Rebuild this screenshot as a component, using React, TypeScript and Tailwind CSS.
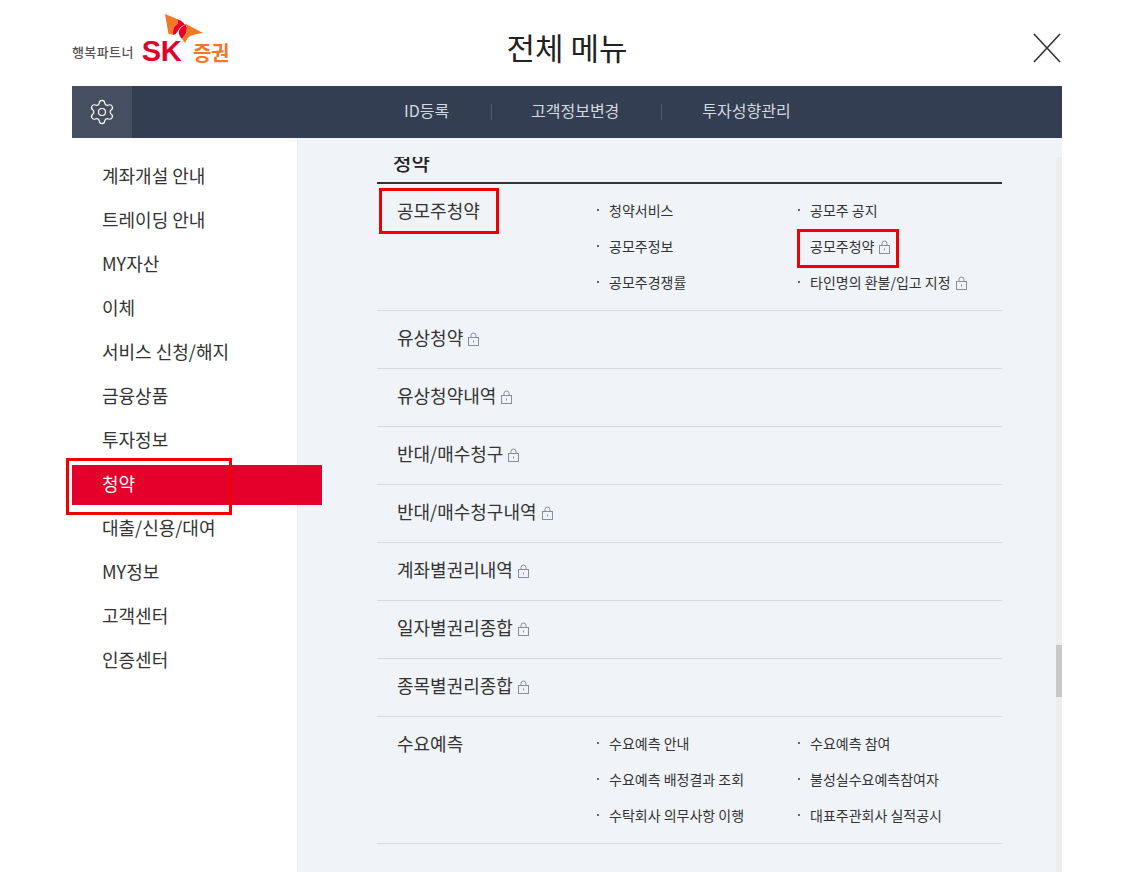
import { Settings } from "lucide-react";

const sideMenu = [
	"계좌개설 안내",
	"트레이딩 안내",
	"MY자산",
	"이체",
	"서비스 신청/해지",
	"금융상품",
	"투자정보",
	"청약",
	"대출/신용/대여",
	"MY정보",
	"고객센터",
	"인증센터",
];

const plainRows = [
	"유상청약",
	"유상청약내역",
	"반대/매수청구",
	"반대/매수청구내역",
	"계좌별권리내역",
	"일자별권리종합",
	"종목별권리종합",
];

type SubItem = { label: string; lock?: boolean; boxed?: boolean };

const offeringItems: SubItem[] = [
	{ label: "청약서비스" },
	{ label: "공모주 공지" },
	{ label: "공모주정보" },
	{ label: "공모주청약", lock: true, boxed: true },
	{ label: "공모주경쟁률" },
	{ label: "타인명의 환불/입고 지정", lock: true },
];

const forecastItems: SubItem[] = [
	{ label: "수요예측 안내" },
	{ label: "수요예측 참여" },
	{ label: "수요예측 배정결과 조회" },
	{ label: "불성실수요예측참여자" },
	{ label: "수탁회사 의무사항 이행" },
	{ label: "대표주관회사 실적공시" },
];

function LockIcon({ className }: { className: string }) {
	return (
		<svg viewBox="0 0 11 14" width="11" height="14" fill="none" className={className}>
			<path d="M3 6V3.5a2.5 2.5 0 0 1 5 0V6" stroke="#8a8f96" />
			<rect x="0.5" y="5.5" width="10" height="8" stroke="#8a8f96" />
			<rect x="5" y="8.5" width="1" height="2" fill="#8a8f96" />
		</svg>
	);
}

function SkLogo() {
	return (
		<div className="flex items-end w-[159px] h-[52px] relative">
			<span className="text-[13px] leading-[16px] font-medium text-[#555] mb-[6px] tracking-[0.4px] whitespace-nowrap">
				행복파트너
			</span>
			<span className="ml-[8px] text-[29px] leading-[30px] font-black text-[#e4002b] font-['Liberation_Sans',sans-serif] tracking-[-0.5px]">
				SK
			</span>
			<span className="ml-[12px] text-[20px] leading-[24px] font-bold text-[#f47725] mb-[1px] tracking-[-0.5px] whitespace-nowrap">
				증권
			</span>
			<svg viewBox="0 0 40 33" width="40" height="33" className="absolute left-[93px] top-0">
				<path d="M0 0 L12 5 Q15 9 10 12 Q7 16 8.5 21 L3.5 20 Z" fill="#f47725" />
				<path d="M12 5 Q18 7 20 11 Q15 12 13 17 Q11 20 8.5 21 Q7 16 10 12 Q15 9 12 5 Z" fill="#e4002b" />
				<path d="M20 11 L21 10 Q24 18 17 25 Q13 21 14 17 Q15 13 20 11 Z" fill="#e4002b" />
				<path d="M21 10 L38 19 Q30 20 25 22 Q22 24 20 29 L17 25 Q24 18 21 10 Z" fill="#f47725" />
			</svg>
		</div>
	);
}

function SubGrid({ items }: { items: SubItem[] }) {
	return (
		<div className="grid grid-cols-[201px_1fr] auto-rows-[36px] ml-[218px] pt-[8px]">
			{items.map((item) => (
				<div
					key={item.label}
					className="relative flex items-center pl-[14px] text-[14px] text-[#333] whitespace-nowrap"
				>
					{!item.boxed && (
						<span className="absolute left-[2px] top-[17px] w-[2px] h-[2px] bg-[#666]" />
					)}
					{item.label}
					{item.lock && <LockIcon className="ml-[5px] mt-[2px]" />}
					{item.boxed && (
						<span className="absolute left-[1px] top-[1px] w-[102px] h-[39px] border-[3px] border-[#f00000]" />
					)}
				</div>
			))}
		</div>
	);
}

export default function App() {
	return (
		<div className="w-[1130px] h-[872px] overflow-hidden bg-white font-['Noto_Sans_CJK_KR','Noto_Sans',sans-serif]">
			<div className="ml-[72px] w-[990px]">
				<header className="h-[86px] grid grid-cols-3 items-center">
					<div className="mt-[-7px]">
						<SkLogo />
					</div>
					<h1 className="text-[31px] leading-[40px] text-[#222] text-center mb-[-8px]">전체 메뉴</h1>
					<svg viewBox="0 0 28 30" width="28" height="30" className="justify-self-end mr-[1px] mt-[9px]">
						<path d="M1 1 L27 29 M27 1 L1 29" stroke="#333" strokeWidth="1.6" fill="none" />
					</svg>
				</header>

				<nav className="h-[52px] bg-[#333e52] flex items-center">
					<div className="w-[60px] h-full bg-[#464f61] flex items-center justify-center">
						<Settings size={28} strokeWidth={1} className="text-white" />
					</div>
					<div className="flex items-center ml-[272px] text-[16px] text-[#d5d9e0]">
						<span className="w-[45px] whitespace-nowrap mb-[5px]">ID등록</span>
						<span className="w-px h-[16px] bg-[#4f5a6c] ml-[42px] mr-[39px]" />
						<span className="whitespace-nowrap mb-[5px]">고객정보변경</span>
						<span className="w-px h-[16px] bg-[#4f5a6c] ml-[42px] mr-[40px]" />
						<span className="whitespace-nowrap mb-[5px]">투자성향관리</span>
					</div>
				</nav>

				<div className="flex h-[734px]">
					<aside className="w-[226px] shrink-0 pt-[15px] border-r border-[#e6e9ee] relative z-10">
						{sideMenu.map((name) => (
							<div key={name} className="h-[44px] flex items-center">
								{name === "청약" ? (
									<div className="w-[250px] shrink-0 h-[40px] bg-[#e4002b] text-white flex items-center pl-[30px] pb-[3px] text-[18px] mt-[4px]">
										{name}
									</div>
								) : (
									<span className="pl-[30px] text-[18px] text-[#333] whitespace-nowrap">{name}</span>
								)}
							</div>
						))}
						<span className="absolute left-[-6px] top-[320px] w-[166px] h-[57px] border-[3px] border-[#f00000]" />
					</aside>

					<main className="flex-1 bg-[#f0f4f8] pt-[19px] flex">
						<div className="flex-1 overflow-hidden">
							<div className="ml-[79px] mr-[54px] mt-[-6px]">
								{/* heading is scrolled partly out of the panel, same as the screenshot */}
								<div className="h-[33px] border-b-2 border-[#333] pl-[16px] text-[20px] leading-[23px] font-medium text-[#222]">
									청약
								</div>

								<div className="h-[127px] border-b border-[#d8dce1] relative">
									<div className="absolute left-[20px] top-[13px] text-[18px] leading-[26px] text-[#333]">공모주청약</div>
									<span className="absolute left-[2px] top-[4px] w-[120px] h-[46px] border-[3px] border-[#f00000]" />
									<SubGrid items={offeringItems} />
								</div>

								{plainRows.map((row) => (
									<div key={row} className="h-[58px] border-b border-[#d8dce1] flex items-center pl-[20px] pb-[4px] text-[18px] text-[#333]">
										{row}
										<LockIcon className="ml-[5px] mt-[3px]" />
									</div>
								))}

								<div className="h-[127px] border-b border-[#d8dce1] relative">
									<div className="absolute left-[20px] top-[13px] text-[18px] leading-[26px] text-[#333]">수요예측</div>
									<SubGrid items={forecastItems} />
								</div>
							</div>
						</div>
						<div className="w-[6px] bg-[#eceef0] relative">
							<span className="absolute left-0 top-[488px] w-full h-[52px] bg-[#c8c8c8]" />
						</div>
					</main>
				</div>
			</div>
		</div>
	);
}
